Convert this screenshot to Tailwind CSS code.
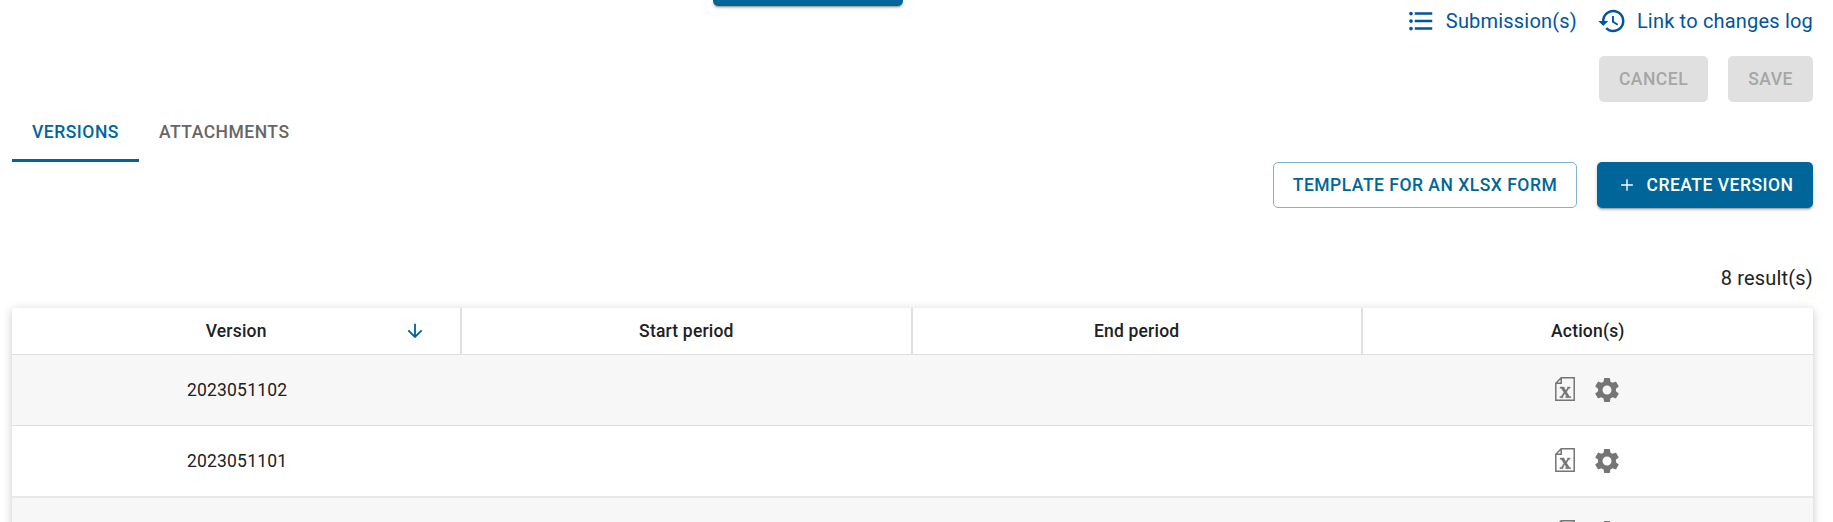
<!DOCTYPE html>
<html lang="en">
<head>
<meta charset="utf-8">
<title>Versions</title>
<script src="https://cdn.jsdelivr.net/npm/@tailwindcss/browser@4"></script>
</head>
<body class="h-[522px] overflow-hidden bg-white font-[Roboto,sans-serif] text-[#212121]">
<svg class="hidden">
  <symbol id="excel" viewBox="0 0 20 24">
    <path d="M6.2.8H19.2V23.2H.8V6.2ZM6.2.8V6.2H.8" fill="none" stroke="#757575" stroke-width="1.5"/>
    <path d="M5 10h4.200v1L11 13.500l1.400-2.500V10h2.700v1.200h-1.200l-2.300 3.800 2.900 4.500h1.200v1.200H10.700v-1.200h.9l-1.900-3-1.700 3v1.200H4.900v-1.200h1.300l2.700-4.300L6.200 11.200H5Z" fill="#757575" stroke="#757575" stroke-width=".4"/>
  </symbol>
  <symbol id="gear" viewBox="0 0 24 24">
    <path fill="#757575" d="M19.14 12.94c.04-.3.06-.61.06-.94 0-.32-.02-.64-.07-.94l2.03-1.58c.18-.14.23-.41.12-.61l-1.92-3.32c-.12-.22-.37-.29-.59-.22l-2.39.96c-.5-.38-1.03-.7-1.62-.94l-.36-2.54c-.04-.24-.24-.41-.48-.41h-3.840c-.24 0-.43.17-.47.41l-.36 2.540c-.59.24-1.130.57-1.620.94l-2.390-.96c-.22-.08-.47 0-.59.22L2.740 8.870c-.12.21-.08.47.12.61l2.030 1.580c-.05.3-.09.63-.09.94s.02.64.07.94l-2.030 1.580c-.18.14-.23.41-.12.61l1.920 3.320c.12.22.37.29.59.22l2.390-.96c.5.38 1.030.7 1.620.94l.36 2.540c.05.24.24.41.48.41h3.840c.24 0 .44-.17.47-.41l.36-2.540c.59-.24 1.130-.56 1.620-.94l2.390.96c.22.08.47 0 .59-.22l1.920-3.320c.12-.22.07-.47-.12-.61l-2.010-1.580zM12 15.600c-1.980 0-3.600-1.620-3.600-3.600s1.620-3.600 3.600-3.600 3.600 1.620 3.600 3.600-1.620 3.600-3.600 3.600z"/>
  </symbol>
</svg>
<main class="relative h-[522px] w-full overflow-hidden pl-3 pr-5">
  <div class="absolute left-[713px] top-0 h-[6.25px] w-[190px] rounded-b-[5px] bg-[#006699] shadow-[0_3px_1px_-2px_rgba(0,0,0,0.2),0_2px_2px_0_rgba(0,0,0,0.14),0_1px_5px_0_rgba(0,0,0,0.12)]"></div>

  <div class="flex h-[42px] items-center justify-end gap-5 text-[20px] tracking-[0.00938em] text-[#00559f]">
    <a class="flex items-center gap-2.5">
      <svg class="size-[30px]" viewBox="0 0 24 24" fill="currentColor"><path d="M4 10.500c-.83 0-1.500.67-1.500 1.500s.67 1.500 1.500 1.500 1.500-.67 1.500-1.500-.67-1.500-1.500-1.500zm0-6c-.83 0-1.500.67-1.500 1.500S3.170 7.500 4 7.500 5.500 6.830 5.500 6 4.830 4.500 4 4.500zm0 12c-.83 0-1.500.68-1.500 1.500s.68 1.500 1.500 1.500 1.500-.68 1.500-1.500-.67-1.500-1.500-1.500zM7 19h14v-2H7v2zm0-6h14v-2H7v2zm0-8v2h14V5H7z"/></svg>
      <span>Submission(s)</span>
    </a>
    <a class="flex items-center gap-2.5">
      <svg class="size-[30px]" viewBox="0 0 24 24" fill="currentColor"><path d="M13 3c-4.970 0-9 4.030-9 9H1l3.890 3.890.07.14L9 12H6c0-3.870 3.130-7 7-7s7 3.130 7 7-3.130 7-7 7c-1.930 0-3.680-.79-4.940-2.060l-1.420 1.420C8.270 19.990 10.510 21 13 21c4.970 0 9-4.030 9-9s-4.030-9-9-9zm-1 5v5l4.280 2.540.72-1.210-3.500-2.080V8H12z"/></svg>
      <span>Link to changes log</span>
    </a>
  </div>

  <div class="mt-[14px] flex justify-end gap-5 text-[17.5px] font-medium tracking-[0.02857em] text-[#a6a6a6]">
    <button class="h-[46px] w-[109px] rounded-[5px] bg-[#e0e0e0]">CANCEL</button>
    <button class="h-[46px] w-[85px] rounded-[5px] bg-[#e0e0e0]">SAVE</button>
  </div>

  <div class="flex h-[60px] text-[17.5px] font-medium tracking-[0.02857em]">
    <div class="flex w-[127px] items-center justify-center border-b-[3px] border-[#006699] pt-[3px] text-[#006699]">VERSIONS</div>
    <div class="flex items-center px-5 text-[#666666]">ATTACHMENTS</div>
  </div>

  <div class="flex justify-end gap-5 text-[17.5px] font-medium tracking-[0.02857em]">
    <button class="h-[46px] w-[304px] rounded-[5px] border border-[#80b3cc] text-[#006699]">TEMPLATE FOR AN XLSX FORM</button>
    <button class="flex h-[46px] w-[216px] items-center justify-center gap-2.5 rounded-[5px] bg-[#006699] text-white shadow-[0_3px_1px_-2px_rgba(0,0,0,0.2),0_2px_2px_0_rgba(0,0,0,0.14),0_1px_5px_0_rgba(0,0,0,0.12)]">
      <svg class="size-5" viewBox="0 0 24 24" fill="currentColor"><path d="M19 12.800h-6.200V19h-1.600v-6.200H5v-1.600h6.200V5h1.600v6.200H19z"/></svg>
      <span>CREATE VERSION</span>
    </button>
  </div>

  <div class="mt-[55px] flex h-[30px] items-center justify-end text-[20px] tracking-[0.00938em]">8 result(s)</div>

  <section class="mt-[15px] rounded-t-[3px] bg-white text-[17.5px] shadow-[0_2px_10px_rgba(0,0,0,0.22)]">
    <div class="grid h-[47px] grid-cols-4 border-b border-[#e0e0e0] text-center font-medium tracking-[0.01071em]">
      <div class="relative flex items-center justify-center border-r-[2px] border-[#e0e0e0]">Version
        <svg class="absolute right-[34px] size-[22px]" viewBox="0 0 24 24" fill="#006699"><path d="M20 12l-1.410-1.410L13 16.170V4h-2v12.170l-5.580-5.590L4 12l8 8 8-8z"/></svg>
      </div>
      <div class="flex items-center justify-center border-r-[2px] border-[#e0e0e0]">Start period</div>
      <div class="flex items-center justify-center border-r-[2px] border-[#e0e0e0]">End period</div>
      <div class="flex items-center justify-center">Action(s)</div>
    </div>
    <div class="grid h-[71px] grid-cols-4 items-center border-b border-[#e0e0e0] bg-[#f7f7f7] tracking-[0.01071em]">
      <div class="text-center">2023051102</div>
      <div class="col-start-4 flex items-center pl-[192px]"><svg class="mb-0.5 h-6 w-5"><use href="#excel"/></svg><svg class="ml-[17px] size-[30px]"><use href="#gear"/></svg></div>
    </div>
    <div class="grid h-[72px] grid-cols-4 items-center border-b-2 border-[#e8e8e8] bg-white tracking-[0.01071em]">
      <div class="text-center">2023051101</div>
      <div class="col-start-4 flex items-center pl-[192px]"><svg class="mb-0.5 h-6 w-5"><use href="#excel"/></svg><svg class="ml-[17px] size-[30px]"><use href="#gear"/></svg></div>
    </div>
    <div class="grid h-[70px] grid-cols-4 items-center bg-[#f7f7f7]">
      <div class="col-start-4 flex items-center pl-[192px]"><svg class="mb-0.5 h-6 w-5"><use href="#excel"/></svg><svg class="ml-[17px] size-[30px]"><use href="#gear"/></svg></div>
    </div>
  </section>
</main>
</body>
</html>
